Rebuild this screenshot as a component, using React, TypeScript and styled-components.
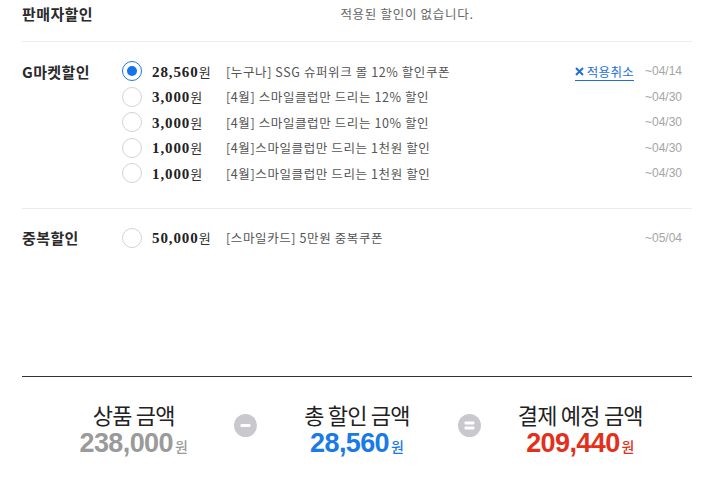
import React from 'react';
import styled, { createGlobalStyle } from 'styled-components';

const GlobalStyle = createGlobalStyle`
  body {
    margin: 0;
    background: #fff;
    font-family: "Noto Sans CJK KR", "Noto Sans", sans-serif;
  }
`;

const Page = styled.div`
  width: 670px;
  margin: 0 22px;
  height: 480px;
  display: flex;
  flex-direction: column;
`;

const Section = styled.div<{ $padTop: number; $padBottom: number; $border?: boolean }>`
  display: flex;
  align-items: flex-start;
  padding-top: ${(p) => p.$padTop}px;
  padding-bottom: ${(p) => p.$padBottom}px;
  border-bottom: ${(p) => (p.$border ? '1px solid #ececec' : 'none')};
`;

const SectionTitle = styled.div<{ $heavy?: boolean }>`
  width: 100px;
  flex: none;
  height: 25.5px;
  line-height: 25.5px;
  font-size: 15px;
  font-weight: ${(p) => (p.$heavy ? 700 : 600)};
  color: #2b2b2b;
  letter-spacing: 0.4px;
`;

const EmptyMessage = styled.div`
  flex: 1;
  text-align: center;
  height: 25.5px;
  line-height: 25.5px;
  font-size: 12.5px;
  color: #666;
  letter-spacing: 0.7px;
`;

const Rows = styled.div`
  flex: 1;
  display: flex;
  flex-direction: column;
`;

const Row = styled.label`
  height: 25.5px;
  display: flex;
  align-items: center;
  padding-right: 10px;
`;

const Radio = styled.span<{ $checked?: boolean }>`
  width: 20px;
  height: 20px;
  box-sizing: border-box;
  border-radius: 50%;
  border: 1px solid ${(p) => (p.$checked ? '#1f74e6' : '#d3d3d3')};
  display: flex;
  align-items: center;
  justify-content: center;
  flex: none;
  &::after {
    content: '';
    display: ${(p) => (p.$checked ? 'block' : 'none')};
    width: 10px;
    height: 10px;
    border-radius: 50%;
    background: #1673ea;
  }
`;

const Amount = styled.span`
  width: 74px;
  flex: none;
  margin-left: 10px;
  font-family: "Liberation Serif", serif;
  font-weight: 700;
  font-size: 15px;
  letter-spacing: 0.9px;
  color: #222;
  white-space: nowrap;
`;

const Won = styled.span`
  font-family: "Noto Sans CJK KR", sans-serif;
  font-weight: 400;
  font-size: 13px;
  letter-spacing: 0;
  color: #333;
`;

const Desc = styled.span`
  flex: 1;
  font-size: 12.5px;
  color: #555;
  letter-spacing: 0.6px;
  white-space: nowrap;
`;

const Cancel = styled.a`
  display: flex;
  align-items: center;
  gap: 3px;
  font-size: 12.5px;
  color: #1f6fd6;
  text-decoration: none;
  border-bottom: 1px solid #1f6fd6;
  line-height: 15px;
  padding-bottom: 1px;
  margin-right: 6px;
  margin-top: 2px;
  letter-spacing: 0.3px;
  cursor: pointer;
`;

const Period = styled.span`
  width: 42px;
  text-align: right;
  font-family: "Liberation Sans", sans-serif;
  font-size: 12px;
  color: #a5a5a5;
`;

const Spacer = styled.div`
  flex: 1;
`;

const Summary = styled.div`
  border-top: 1px solid #333;
  height: 103px;
  display: grid;
  grid-template-columns: 1fr 1fr 1fr;
`;

const SummaryCell = styled.div`
  display: flex;
  flex-direction: column;
  align-items: center;
  padding-top: 24px;
  position: relative;
`;

const SummaryLabel = styled.div`
  font-size: 22px;
  line-height: 26px;
  color: #222;
  letter-spacing: -0.8px;
`;

const SummaryValue = styled.div<{ $color: string }>`
  font-family: "Liberation Sans", sans-serif;
  font-weight: 700;
  font-size: 27px;
  line-height: 30px;
  color: ${(p) => p.$color};
  letter-spacing: -0.6px;
  margin-top: 1px;
  display: flex;
  align-items: baseline;
`;

const SummaryWon = styled.span`
  font-family: "Noto Sans CJK KR", sans-serif;
  font-size: 14px;
  font-weight: 500;
  margin-left: 2px;
  letter-spacing: 0;
`;

const Operator = styled.span`
  position: absolute;
  right: -12px;
  top: 37px;
  width: 23px;
  height: 23px;
  border-radius: 50%;
  background: #c9c9cd;
  display: flex;
  align-items: center;
  justify-content: center;
  z-index: 1;
`;

const CancelIcon = () => (
  <svg width="9" height="9" viewBox="0 0 9 9">
    <path d="M1 1 L8 8 M8 1 L1 8" stroke="#1f6fd6" strokeWidth="2" />
  </svg>
);

const MinusIcon = () => (
  <svg width="11" height="11" viewBox="0 0 11 11">
    <rect x="0.5" y="4" width="10" height="3" rx="1" fill="#fff" />
  </svg>
);

const EqualsIcon = () => (
  <svg width="11" height="11" viewBox="0 0 11 11">
    <rect x="0.5" y="1.5" width="10" height="3" rx="1" fill="#fff" />
    <rect x="0.5" y="6.5" width="10" height="3" rx="1" fill="#fff" />
  </svg>
);

type Coupon = {
  amount: string;
  desc: string;
  period: string;
  checked?: boolean;
};

const gmarketCoupons: Coupon[] = [
  { amount: '28,560', desc: '[누구나] SSG 슈퍼위크 몰 12% 할인쿠폰', period: '~04/14', checked: true },
  { amount: '3,000', desc: '[4월] 스마일클럽만 드리는 12% 할인', period: '~04/30' },
  { amount: '3,000', desc: '[4월] 스마일클럽만 드리는 10% 할인', period: '~04/30' },
  { amount: '1,000', desc: '[4월]스마일클럽만 드리는 1천원 할인', period: '~04/30' },
  { amount: '1,000', desc: '[4월]스마일클럽만 드리는 1천원 할인', period: '~04/30' },
];

const dupCoupons: Coupon[] = [
  { amount: '50,000', desc: '[스마일카드] 5만원 중복쿠폰', period: '~05/04' },
];

const CouponRow: React.FC<{ item: Coupon }> = ({ item }) => (
  <Row>
    <Radio $checked={item.checked} />
    <Amount>
      {item.amount}
      <Won>원</Won>
    </Amount>
    <Desc>{item.desc}</Desc>
    {item.checked && (
      <Cancel>
        <CancelIcon />
        적용취소
      </Cancel>
    )}
    <Period>{item.period}</Period>
  </Row>
);

const App: React.FC = () => (
  <>
    <GlobalStyle />
    <Page>
      <Section $padTop={1} $padBottom={14} $border>
        <SectionTitle $heavy>판매자할인</SectionTitle>
        <EmptyMessage>적용된 할인이 없습니다.</EmptyMessage>
      </Section>

      <Section $padTop={17} $padBottom={22} $border>
        <SectionTitle>G마켓할인</SectionTitle>
        <Rows>
          {gmarketCoupons.map((c, i) => (
            <CouponRow key={i} item={c} />
          ))}
        </Rows>
      </Section>

      <Section $padTop={16} $padBottom={0}>
        <SectionTitle>중복할인</SectionTitle>
        <Rows>
          {dupCoupons.map((c, i) => (
            <CouponRow key={i} item={c} />
          ))}
        </Rows>
      </Section>

      <Spacer />

      <Summary>
        <SummaryCell>
          <SummaryLabel>상품 금액</SummaryLabel>
          <SummaryValue $color="#9a9a9a">
            238,000<SummaryWon>원</SummaryWon>
          </SummaryValue>
          <Operator>
            <MinusIcon />
          </Operator>
        </SummaryCell>
        <SummaryCell>
          <SummaryLabel>총 할인 금액</SummaryLabel>
          <SummaryValue $color="#1a7ae6">
            28,560<SummaryWon>원</SummaryWon>
          </SummaryValue>
          <Operator>
            <EqualsIcon />
          </Operator>
        </SummaryCell>
        <SummaryCell>
          <SummaryLabel>결제 예정 금액</SummaryLabel>
          <SummaryValue $color="#e3301c">
            209,440<SummaryWon>원</SummaryWon>
          </SummaryValue>
        </SummaryCell>
      </Summary>
    </Page>
  </>
);

export default App;
